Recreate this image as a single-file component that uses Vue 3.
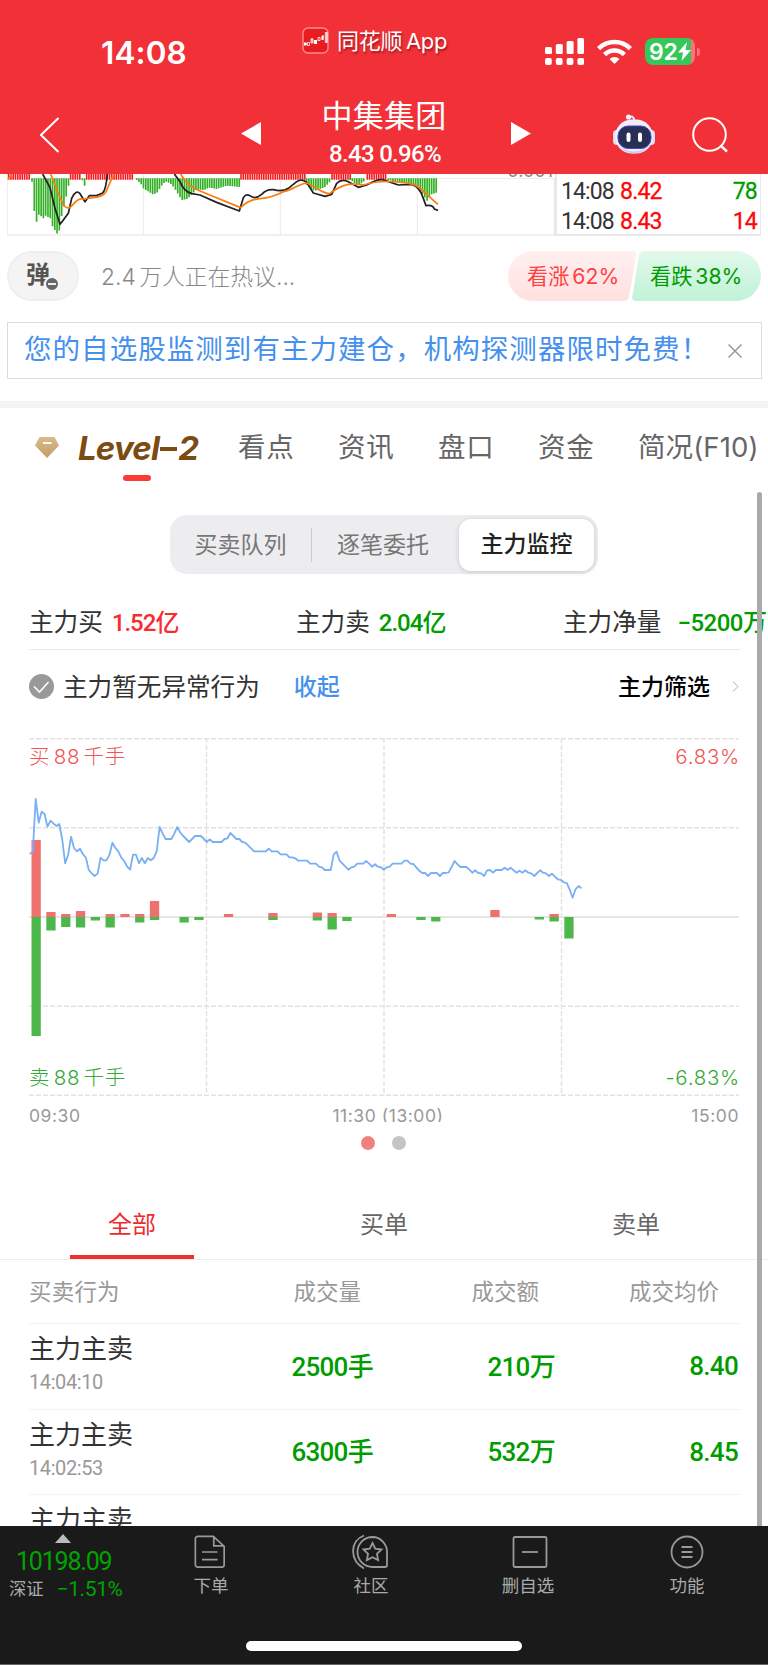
<template>
  <div class="page">
    <header class="top">
      <div class="statusbar">
        <div class="clock">14:08</div>
        <div class="from">
          <svg class="app-icon" viewBox="0 0 27 27">
            <rect x="1" y="1" width="25" height="25" rx="5" fill="#e91d21" stroke="#fa8d8b" stroke-width="1.4" />
            <path d="M2 17h3M10 11v5M21 8v4M14 13v4M24.300 5v10" stroke="#fff" fill="none" />
            <path d="M2 15.500h2.500v3H2zM12 13h3v4h-3zM19.500 9h2v4h-2z" fill="#fff" />
            <path d="M5.500 15.500h2v3h-2zM9 12h2v4H9zM16 10.500h2v3h-2zM23.300 5.500h2v10h-2z" fill="none" stroke="#fff" stroke-width=".8" />
          </svg>
          <span>同花顺 App</span>
        </div>
        <div class="sys">
          <svg class="signal" viewBox="0 0 39 27" fill="#fff">
            <rect x="0" y="9" width="7" height="7" rx="1.500" /><rect x="10.800" y="6" width="7" height="10" rx="1.500" />
            <rect x="21.600" y="3" width="7" height="13" rx="1.500" /><rect x="32.400" y="0" width="6.600" height="16" rx="1.500" />
            <rect v-for="x in [0, 10.8, 21.6, 32.4]" :key="x" :x="x" y="20" width="6.800" height="7" rx="2" />
          </svg>
          <svg class="wifi" viewBox="0 0 35 25" fill="none" stroke="#fff" stroke-width="4.600">
            <path d="M1.600 9.600a22.500 22.500 0 0 1 31.800 0" />
            <path d="M7.600 15.600a14 14 0 0 1 19.800 0" />
            <path d="M17.500 25l-5-5a7.100 7.100 0 0 1 10 0z" fill="#fff" stroke="none" />
          </svg>
          <div class="battery">
            <span>92</span>
            <svg viewBox="0 0 13 19"><path d="M9 0L0 10.500h5L3.500 19 13 8H7.500z" fill="#fff" /></svg>
          </div>
          <i class="cap"></i>
        </div>
      </div>
      <div class="nav">
        <svg class="back" viewBox="0 0 20 36"><path d="M18.500 1L1 18l17.500 17" fill="none" stroke="#fff" stroke-width="2" /></svg>
        <svg class="arrow" viewBox="0 0 20 23"><path d="M0 11.500L20 0v23z" fill="#fff" /></svg>
        <div class="stock">
          <div class="name">中集集团</div>
          <div class="quote">8.43 0.96%</div>
        </div>
        <svg class="arrow" viewBox="0 0 20 23"><path d="M20 11.500L0 0v23z" fill="#fff" /></svg>
        <svg class="robot" viewBox="0 0 44 40">
          <path d="M16 3.500c3-2 6-1 6.500 3" fill="none" stroke="#e3e6ff" stroke-width="2" />
          <circle cx="16.500" cy="3" r="2.600" fill="#f4f3ff" />
          <rect x="1" y="16" width="8" height="15" rx="4" fill="#dddff8" /><rect x="35" y="16" width="8" height="15" rx="4" fill="#dddff8" />
          <rect x="3" y="5.500" width="38" height="34" rx="17" fill="#eeeffd" />
          <path d="M8 33q14 9 28 0q-6 6.500-14 6.500T8 33z" fill="#c9c8f2" />
          <rect x="6" y="12" width="33" height="22.500" rx="10" fill="#263057" stroke="#5145bd" stroke-width="1" />
          <rect x="14.500" y="18.500" width="4" height="9.500" rx="2" fill="#fff" /><rect x="26" y="18.500" width="4" height="9.500" rx="2" fill="#fff" />
        </svg>
        <svg class="search" viewBox="0 0 36 36" fill="none" stroke="#fff" stroke-width="2"><circle cx="17.500" cy="17.500" r="16.300" /><path d="M28.500 28.500l6.500 6" stroke-width="2.400" /></svg>
      </div>
    </header>

    <section class="mini">
      <div class="mini-chart">
        <svg viewBox="21 27 1644 186" preserveAspectRatio="none">
          <g stroke="#ebebeb" fill="none">
            <path d="M21 40H1665" stroke-width="3" /><path d="M21 210H1665" stroke-width="5" />
            <path d="M22 27V210M430 27V210M841 27V210M1252 27V210" stroke-width="3" />
            <path d="M1663 40V210" stroke-width="4" />
          </g>
          <path :d="redBars" stroke="#f8181b" stroke-width="4.800" />
          <path :d="greenBars" stroke="#32b024" stroke-width="5" />
          <g fill="none" stroke-width="5.200" stroke-linejoin="round">
            <path stroke="#222" d="M128 27L150 68L165 130L180 178L190 165L205 145L215 100Q228 72 240 86L255 110L268 92L290 92L308 84Q318 75 322 27M523 27L540 50Q552 80 575 86L600 90L650 112L718 138L730 98Q738 85 750 92Q765 105 785 88Q800 72 820 74Q850 82 868 68L890 50Q905 40 920 52L940 84L975 94L995 88L1010 55Q1025 40 1045 50L1075 67L1100 60Q1140 38 1155 46L1195 60L1235 58Q1258 65 1268 95L1278 122Q1298 118 1303 132L1314 136" />
            <path stroke="#fb7d10" d="M24 44L34 27M152 27L175 85L190 120Q205 138 220 118T250 102L285 97Q312 95 320 76T342 27M542 27Q560 62 600 78L722 128Q745 104 780 101T850 80C880 76 890 58 920 54C940 62 965 84 988 86C1010 72 1030 50 1090 60Q1150 40 1240 58C1270 70 1280 92 1314 118" />
          </g>
        </svg>
        <span class="tick">0.001</span>
      </div>
      <div class="ticks">
        <div class="deal"><span>14:08</span><b class="red">8.42</b><b class="vol">78</b></div>
        <div class="deal"><span>14:08</span><b class="red">8.43</b><b class="vol red">14</b></div>
      </div>
    </section>

    <section class="talk">
      <div class="danmu">弹<i></i></div>
      <div class="hint">2.4 万人正在热议...</div>
      <div class="votes">
        <svg viewBox="0 0 253 50" class="vote-bg">
          <defs>
            <linearGradient id="up" x2="0" y2="1"><stop stop-color="#fff0f0" /><stop offset="1" stop-color="#ffe0de" /></linearGradient>
            <linearGradient id="down" x2="0" y2="1"><stop stop-color="#e2f9ec" /><stop offset="1" stop-color="#c0f2d6" /></linearGradient>
          </defs>
          <path d="M25 0H125Q129 0 128.300 4L121 46Q120 50 116 50H25A25 25 0 0 1 25 0z" fill="url(#up)" />
          <path d="M137 0H228A25 25 0 0 1 228 50H128Q123.500 50 124.300 46L131 4Q132 0 137 0z" fill="url(#down)" />
        </svg>
        <span class="bull">看涨 62%</span><span class="bear">看跌 38%</span>
      </div>
    </section>

    <section class="notice">
      <span>您的自选股监测到有主力建仓，机构探测器限时免费！</span>
      <svg viewBox="0 0 14 14"><path d="M.5.5l13 13M13.500.5l-13 13" stroke="#999" stroke-width="1.500" /></svg>
    </section>

    <nav class="tabs">
      <div class="level">
        <svg viewBox="0 0 24 21"><defs><linearGradient id="gem" x2="0" y2="1"><stop stop-color="#d9bb8d" /><stop offset="1" stop-color="#c69c61" /></linearGradient></defs><path d="M4.500 0h15L24 8.500 12 21 0 8.500z" fill="url(#gem)" /><path d="M8 6h8.500" stroke="#fff" stroke-width="2" /></svg>
        <span>Level<i></i>2</span>
      </div>
      <span v-for="t in tabs" :key="t" class="tab">{{ t }}</span>
    </nav>

    <div class="segment">
      <span>买卖队列</span><i></i><span>逐笔委托</span><b>主力监控</b>
    </div>

    <div class="stats">
      <div>主力买<b class="red">1.52亿</b></div>
      <div>主力卖<b class="green">2.04亿</b></div>
      <div>主力净量<b class="green net">−5200万</b></div>
    </div>
    <div class="behavior">
      <svg class="check" viewBox="0 0 25 25"><circle cx="12.500" cy="12.500" r="12.500" fill="#999" /><path d="M5 12.500l5.500 5.500L19.500 8" fill="none" stroke="#fff" stroke-width="1.600" /></svg>
      <span>主力暂无异常行为</span>
      <b class="fold">收起</b>
      <b class="filter">主力筛选</b>
      <svg class="chev" viewBox="0 0 7 11"><path d="M1 .5l5 5-5 5" fill="none" stroke="#aaa" /></svg>
    </div>

    <section class="chart">
      <svg viewBox="0 0 711 358">
        <path d="M0 .7H710M0 89.700H710M0 268.300H710M0 357.300H710M177.500 0V358M355 0V358M532.500 0V358" stroke="#e2e2e2" stroke-width="1.400" stroke-dasharray="5 2" />
        <path d="M0 179H710" stroke="#e6e6e6" stroke-width="1.800" />
        <g v-for="b in bars" :key="b[0]">
          <rect :x="2.5 + b[0] * 14.8" :y="179 - b[1]" width="9.300" :height="b[1]" fill="#f07070" />
          <rect :x="2.5 + b[0] * 14.8" y="179" width="9.300" :height="b[2]" fill="#4cb84c" />
        </g>
        <polyline :points="priceLine" fill="none" stroke="#79aff3" stroke-width="1.800" stroke-linejoin="round" />
      </svg>
      <div class="corners buy"><span>买 88 千手</span><span>6.83%</span></div>
      <div class="corners sell"><span>卖 88 千手</span><span>-6.83%</span></div>
    </section>
    <div class="times"><span>09:30</span><span>11:30 (13:00)</span><span>15:00</span></div>
    <div class="dots"><i class="on"></i><i></i></div>

    <div class="orders"><span class="on">全部</span><span>买单</span><span>卖单</span></div>
    <div class="list">
      <div class="row head"><span>买卖行为</span><span>成交量</span><span>成交额</span><span class="avg">成交均价</span></div>
      <div v-for="r in rows" :key="r.time" class="row">
        <div class="who"><p>主力主卖</p><small>{{ r.time }}</small></div>
        <b>{{ r.vol }}</b><b>{{ r.amt }}</b><b class="price">{{ r.price }}</b>
      </div>
    </div>

    <footer class="bottom">
      <div class="bar">
        <div class="index">
          <svg viewBox="0 0 16 9"><path d="M8 0l8 9H0z" fill="#bbb" /></svg>
          <b>10198.09</b>
          <div><span>深证</span><em>−1.51%</em></div>
        </div>
        <div class="item order">
          <svg viewBox="0 0 36 36"><path d="M5 1.500h16.500L33 12v19.500a2.500 2.500 0 0 1-2.500 2.500H5a2.500 2.500 0 0 1-2.500-2.500V4A2.500 2.500 0 0 1 5 1.500zM22 2v9.500h10.500M9.500 18h16.500M9.500 26h16.500" /></svg>
          <span>下单</span>
        </div>
        <div class="item club">
          <svg viewBox="0 0 36 36"><path d="M12 1.500C-2 7-3 26 12 34.500M20.500 3a15 15 0 0 0 0 30H33a2 2 0 0 0 2-2V18A14.800 14.800 0 0 0 20.500 3z" /><path d="M20.500 9l2.800 5.600 6.200.9-4.500 4.400 1.100 6.200-5.600-2.900-5.600 2.900 1.100-6.200-4.500-4.400 6.200-.9z" /></svg>
          <span>社区</span>
        </div>
        <div class="item del">
          <svg viewBox="0 0 36 36"><rect x="1.500" y="3" width="33" height="30" rx="1.500" /><path d="M10 18h16" /></svg>
          <span>删自选</span>
        </div>
        <div class="item more">
          <svg viewBox="0 0 36 36"><circle cx="18" cy="18" r="15.500" /><path d="M12.500 13h11M12.500 18h11M12.500 23h11" /></svg>
          <span>功能</span>
        </div>
      </div>
      <div class="home"></div>
    </footer>
    <div class="scrollbar"></div>
  </div>
</template>

<script setup>
const tabs = ['看点', '资讯', '盘口', '资金', '简况(F10)']

const rows = [
  { time: '14:04:10', vol: '2500手', amt: '210万', price: '8.40' },
  { time: '14:02:53', vol: '6300手', amt: '532万', price: '8.45' },
  { time: '', vol: '', amt: '', price: '' }
]

// [slot, buy, sell], one slot = 5 minutes
const bars = [
  [0, 77, 119], [1, 5, 13.5], [2, 3, 10], [3, 6, 10.5], [4, 0, 3.5], [5, 3, 10.5], [6, 3, 0], [7, 3, 5.5],
  [8, 16, 3], [10, 0, 5.5], [11, 0, 3], [13, 3, 0], [16, 4, 3], [19, 4.5, 3.5], [20, 4, 12.5], [21, 0, 4],
  [24, 3, 0], [26, 0, 3], [27, 0, 4.5], [31, 7, 0], [34, 0, 2.5], [35, 3, 4.5], [36, 0, 21.5]
]

// one value per minute, thirds of a pixel
const price = [
  372, 365, 207, 278, 245, 252, 290, 272, 280, 288, 282, 330, 400, 375, 320, 354, 364, 356, 372, 383,
  420, 430, 438, 430, 383, 391, 391, 374, 338, 354, 364, 383, 393, 410, 419, 374, 374, 400, 384, 400,
  384, 391, 384, 364, 291, 310, 327, 327, 327, 310, 291, 308, 318, 327, 336, 327, 318, 318, 318, 327,
  336, 328, 336, 336, 336, 336, 327, 325, 309, 318, 327, 327, 336, 338, 346, 355, 364, 364, 364, 364,
  364, 356, 364, 364, 364, 373, 373, 373, 382, 382, 385, 392, 392, 392, 392, 401, 401, 401, 410, 412,
  420, 420, 420, 373, 365, 392, 401, 410, 419, 412, 410, 401, 401, 401, 393, 401, 410, 403, 410, 412,
  419, 412, 410, 401, 401, 401, 401, 392, 392, 401, 402, 412, 422, 429, 429, 438, 429, 429, 429, 438,
  429, 429, 427, 410, 393, 403, 411, 411, 411, 419, 428, 421, 429, 430, 438, 421, 420, 428, 420, 420,
  420, 413, 420, 413, 421, 428, 422, 428, 421, 428, 430, 438, 429, 421, 428, 430, 438, 431, 440, 448,
  450, 457, 459, 478, 503, 478, 468, 475
]
const priceLine = price.map((v, i) => `${(.8 + i * 2.95).toFixed(1)},${((v - 24) / 3).toFixed(1)}`).join(' ')

// MACD histogram outlines, expanded to single strokes
const dips = [
  [[96, 50], [103, 140], [110, 172], [117, 148], [130, 160], [137, 152], [151, 160], [158, 185], [172, 207], [179, 195], [186, 145], [193, 120], [200, 88], [207, 55]],
  [[247, 46], [254, 63], [257, 46]],
  [[410, 45], [422, 55], [430, 70], [458, 88], [470, 85], [485, 62], [497, 49], [515, 58], [530, 80], [545, 105], [562, 102], [590, 73], [610, 75], [630, 68], [650, 72], [680, 62], [720, 66]],
  [[920, 60], [943, 78], [975, 66], [992, 48]],
  [[1050, 44], [1075, 62], [1095, 46]],
  [[1165, 45], [1200, 52], [1240, 58], [1262, 80], [1282, 108], [1295, 88], [1312, 82]]
]
const depth = (pts, x) => {
  const i = Math.max(1, pts.findIndex(p => p[0] >= x))
  const [a, b] = [pts[i - 1], pts[i]]
  return a[1] + (b[1] - a[1]) * (x - a[0]) / (b[0] - a[0])
}
const greenBars = dips.map(pts => {
  let d = ''
  for (let x = pts[0][0]; x <= pts[pts.length - 1][0]; x += 6.84) d += `M${x.toFixed(1)} 40V${depth(pts, x).toFixed(1)}`
  return d
}).join('')
const redBars = [[26, 92], [212, 245], [260, 400], [723, 915], [996, 1052], [1102, 1160]].map(([a, b]) => {
  let d = ''
  for (let x = a; x <= b; x += 6.84) d += `M${x.toFixed(1)} 27V44`
  return d
}).join('')
</script>

<style>
body{background:#fff}
</style>

<style scoped>
.page{
  position:relative; width:768px; height:1665px; overflow:hidden; display:flex; flex-direction:column;
  background:#fff; color:#333; font-family:Inter,"Noto Sans CJK SC",sans-serif;
}
svg{display:block; flex:none}
span,b,p{white-space:nowrap}
b{font-weight:500; font-family:Roboto,"Noto Sans CJK SC",sans-serif}
.red{color:#fa2b2e}
.green{color:#009c00}

.top{height:174px; flex:none; background:#f23037; color:#fff}
.statusbar{display:flex; height:81px}
.clock{width:201px; padding-left:101px; padding-top:34px; line-height:38px; font-size:31.500px; font-weight:600; letter-spacing:.1px}
.from{display:flex; width:243px; gap:8px; height:28px; padding-top:25px; align-items:center; font-size:22px; letter-spacing:-.3px; word-spacing:-2px; text-shadow:1px 2px 2px rgba(60,0,0,.45)}
.app-icon{width:27px; height:27px; margin-top:2px}
.sys{display:flex; align-items:center; height:27px; padding-top:38px}
.signal{width:39px; height:27px; margin-right:13px}
.wifi{width:35px; height:25px; margin-right:13px}
.battery{display:flex; align-items:center; box-sizing:border-box; width:50px; height:27px; padding-left:4px; border-radius:8px; background:linear-gradient(90deg,#34c759 46px,#f6757c 46px); font-size:23px; font-weight:600; letter-spacing:-.1px; gap:0}
.battery svg{width:13px; height:19px}
.cap{width:3px; height:8px; margin-left:2px; border-radius:0 4px 4px 0; background:#f6757c}
.nav{display:flex; height:93px; align-items:center; padding-left:40px}
.back{width:20px; height:36px; margin:14px 181px 0 0}
.arrow{width:20px; height:23px; margin-top:12px}
.stock{width:250px; height:93px; text-align:center}
.name{height:35px; margin-top:17px; margin-left:-4px; line-height:35px; font-size:31px; font-weight:400; letter-spacing:.2px}
.quote{font:500 24px/43px Roboto,sans-serif; letter-spacing:-.7px; margin-left:-2px}
.robot{width:44px; height:40px; margin:12px 36px 0 81px}
.search{width:36px; height:36px; margin-top:14px}

.mini{display:flex; flex:none; height:62px; padding-left:7px}
.mini-chart{position:relative; width:548px; overflow:hidden}
.mini-chart svg{width:548px; height:62px}
.tick{position:absolute; right:2px; top:-12px; font:18px/18px Inter,sans-serif; color:#888}
.ticks{box-sizing:border-box; width:206px; height:62px; padding:2px 3px 0 4px; border:1px solid #e8e8e8; border-width:0 1px 2px 2px}
.deal{display:flex; height:30px; font:400 23px/32px Roboto,sans-serif; letter-spacing:-.9px}
.deal span{width:59px}
.deal b{font-weight:400; letter-spacing:-.8px; -webkit-text-stroke:.3px}
.deal .red{color:#fd0808}
.deal .vol{margin-left:auto}
.vol{color:#009c00}

.talk{display:flex; flex:none; height:50px; margin:15px 7px 0; align-items:center}
.danmu{position:relative; box-sizing:border-box; width:72px; height:50px; padding-left:17px; border:2px solid #efefef; border-radius:25px; background:#f4f4f4; line-height:43px; font-size:24px; font-weight:700; color:#555}
.danmu i{position:absolute; left:35px; top:23px; width:12px; height:12px; border-radius:50%; border:2px solid #f4f4f4; background:linear-gradient(#eee,#eee) center/8px 2px no-repeat #666}
.hint{margin-left:22px; margin-top:-1px; font-size:22.800px; font-weight:300; color:#888; letter-spacing:0; word-spacing:-3px}
.votes{position:relative; display:flex; width:253px; height:50px; margin-left:auto; line-height:50px; font-size:21.200px; word-spacing:-3px}
.vote-bg{position:absolute; inset:0}
.votes span{position:relative}
.bull{width:123px; padding-left:19px; color:#ff4141}
.bear{color:#009c00}

.notice{display:flex; flex:none; box-sizing:border-box; height:57px; margin:21px 6px 0 7px; padding:0 19px 0 16px; align-items:center; justify-content:space-between; border:1px solid #dcdcdc; font-size:27.500px; letter-spacing:1.050px; color:#4590ef}
.notice span{width:690px; line-height:50px; padding-bottom:4px; overflow:hidden}
.notice svg{width:14px; height:14px}

.tabs{display:flex; flex:none; height:84px; margin-top:22px; border-top:7px solid #f4f4f4; font-size:27.500px; line-height:79px; color:#666; letter-spacing:.8px}
.level{position:relative; display:flex; align-items:center; width:203px; height:80px; padding-left:35px; gap:19px; color:#7b4b12}
.level::after{content:""; position:absolute; left:123px; top:67px; width:28px; height:6px; border-radius:3px; background:#fd3b35}
.level svg{width:24px; height:21px; margin-top:-1px}
.level span{font:italic 700 33px/80px Inter,sans-serif; letter-spacing:-.8px}
.level span i{display:inline-block; width:17px; height:4px; margin:0 1px 9px; background:#7b4b12}
.tab{width:100px; flex:none}
.tab:last-child{letter-spacing:.1px}

.segment{display:flex; flex:none; align-items:center; box-sizing:border-box; width:428px; height:59px; margin:23px 0 0 170px; padding:4px 4px 4px 0; border-radius:17px; background:#ededf0; font-size:23px; color:#777}
.segment span{width:141px; padding-bottom:4px; text-align:center}
.segment i{width:1px; height:34px; background:#ccc}
.segment span:nth-of-type(2){width:147px; box-sizing:border-box; padding-right:5px}
.segment b{flex:1; height:52px; line-height:52px; border-radius:12px; background:#fff; text-align:center; color:#222; box-shadow:0 1px 5px rgba(0,0,0,.16)}

.stats{display:flex; flex:none; height:75px; margin-left:29px; line-height:97px; font-size:24.600px; border-bottom:1px solid #eaeaea; width:711px}
.stats div{width:267px; flex:none; white-space:nowrap}
.stats b{margin-left:9px; font-size:24px; letter-spacing:-1px}
.stats .net{margin-left:16px; letter-spacing:-.5px}
.behavior{display:flex; flex:none; align-items:center; height:73px; margin:0 29px; font-size:24.600px}
.check{width:25px; height:25px; margin-right:9px}
.behavior span,.behavior b{margin-top:-4px}
.behavior b{font-size:23px}
.fold{margin-left:34px; color:#4691ee}
.filter{margin-left:auto; color:#000}
.chev{width:7px; height:11px; margin:0 0 0 22px}

.chart{position:relative; flex:none; width:711px; height:358px; margin:15px 0 0 29px}
.chart svg{width:711px; height:358px}
.corners{position:absolute; left:0; right:1px; display:flex; justify-content:space-between; font-size:20.500px; font-weight:300; line-height:24px; letter-spacing:.7px; word-spacing:-3px}
.corners span:last-child{margin-right:-1px}
.buy{top:7px; color:#ef5557}
.sell{bottom:6px; color:#34a934}
.times{display:flex; flex:none; justify-content:space-between; height:26px; margin:0 29px; overflow:hidden; line-height:40px; font-size:17.500px; color:#999; letter-spacing:.55px}
.times span:nth-child(2){margin-left:4px}
.dots{display:flex; flex:none; justify-content:center; gap:17px; margin:14px 1px 0 0}
.dots i{width:14px; height:14px; border-radius:50%; background:#c4c4c4}
.dots .on{background:#f28080}

.orders{display:flex; flex:none; box-sizing:border-box; height:77px; margin-top:33px; padding:0 6px; line-height:83px; font-size:24px; color:#666; border-bottom:1px solid #ededed}
.orders span{flex:1; box-sizing:border-box; height:77px; text-align:center}
.orders .on{position:relative; color:#ee2a2e}
.orders .on::after{content:""; position:absolute; left:64px; bottom:1px; width:124px; height:4px; background:#ee302f}
.list{flex:none; height:266px; margin:0 28px 0 29px; overflow:hidden}
.row{display:grid; grid-template-columns:210px 135px 182px 184px; box-sizing:border-box; height:85.600px; border-bottom:1px solid #f2f2f2; align-items:center}
.row b{margin:-4px 1px 0 0; font-size:26px; text-align:right; letter-spacing:-.7px; color:#009c00}
.row b.price{margin:0 2px 0 0}
.row.head{height:64px; font-size:22.500px; color:#999}
.head span{margin-top:-3px; text-align:right}
.head span:first-child{text-align:left; letter-spacing:.2px}
.head span:nth-child(2){padding-right:13px}
.head span:nth-child(3){padding-right:17px}
.head .avg{padding-right:21px}
.who p{margin:-4px 0 0; line-height:34px; font-size:26px}
.who small{display:block; height:30px; font:400 20px/33px Roboto,sans-serif; letter-spacing:-.4px; color:#999}

.bottom{position:relative; z-index:2; box-sizing:border-box; flex:none; height:139px; margin-top:auto; background:#1a1a1a; border-bottom:1px solid #666; color:#aaa}
.bar{display:flex; height:115px}
.index{width:184px; padding-top:8px}
.index svg{width:16px; height:9px; margin-left:55px}
.index b{display:block; margin-left:16px; line-height:38px; height:36px; font-size:25px; font-weight:400; letter-spacing:-1.200px; color:#00a400}
.index div{display:flex; gap:13px; margin-left:9px; line-height:20px; font-size:17.300px}
.index em{font:400 21px/20px Roboto,sans-serif; letter-spacing:-.4px; color:#00a400}
.item{display:flex; flex-direction:column; align-items:center; width:54px; padding-top:8px; font-size:17.500px; line-height:32px}
.item svg{width:36px; height:36px; fill:none; stroke:#999; stroke-width:1.800}
.order svg{width:34px; margin-left:-3px}
.club{margin-left:106px}
.club svg{margin-left:-2px}
.del{margin-left:103px}
.del svg{margin-left:3px}
.more{margin-left:105px}
.home{width:276px; height:10px; margin:0 auto; border-radius:5px; background:#fff}
.scrollbar{position:absolute; z-index:1; left:757px; top:492px; width:5px; height:1040px; border-radius:3px; background:#aaa}
</style>
